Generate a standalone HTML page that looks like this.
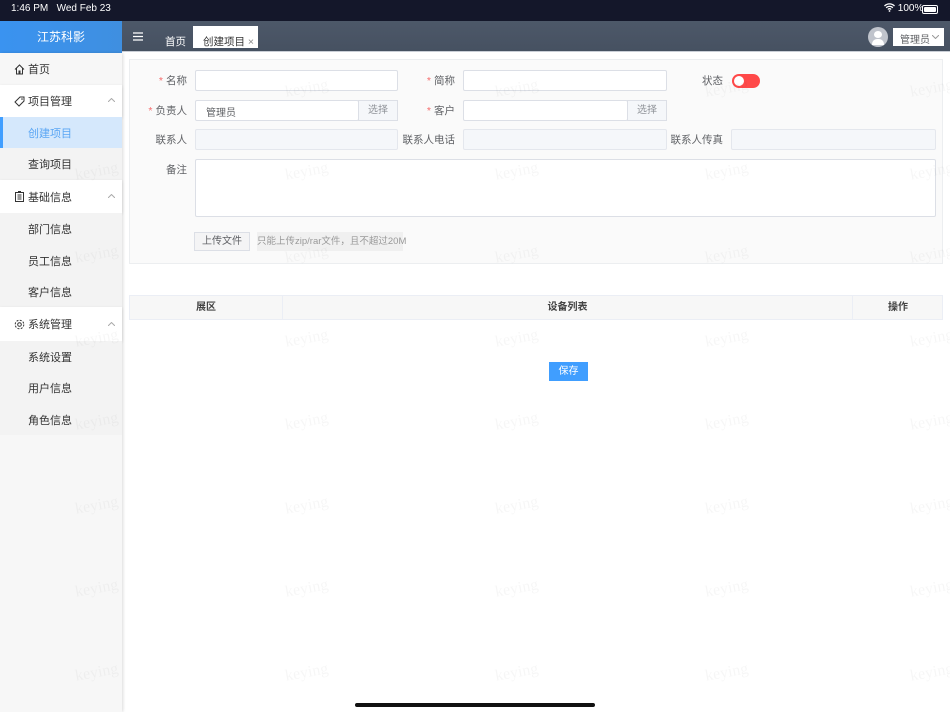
<!DOCTYPE html>
<html><head><meta charset="utf-8"><style>
*{margin:0;padding:0;box-sizing:border-box}
body{width:950px;height:712px;overflow:hidden;position:relative;background:#fff;font-family:"Liberation Sans","Noto Sans CJK SC",sans-serif;font-size:10px;color:#606266}
.a{position:absolute}
.sb{left:0;top:0;width:950px;height:21px;background:#14172a;color:#fff;font-size:10px}
.hd{left:122px;top:21px;width:828px;height:31px;background:linear-gradient(#4d5869,#465161);border-bottom:1px solid #c9ced6}
.logo{left:0;top:21px;width:122px;height:32px;background:linear-gradient(90deg,#3a93f0,#3f8fe0);color:#fff;font-size:12px;text-align:center;line-height:32px}
.side{left:0;top:53px;width:122px;height:659px;background:#f7f7f7;box-shadow:1px 0 3px rgba(0,0,0,.15)}
.mi{position:absolute;left:0;width:122px;font-size:11px;color:#333;display:flex;align-items:center}
.grp{background:#fff;box-shadow:0 1px 3px rgba(0,0,0,.12)}
.sub{background:#f3f3f3;padding-left:28px}
.lb{position:absolute;font-size:10.5px;color:#606266;text-align:right}
.lb i{color:#f56c6c;font-style:normal;margin-right:3px}
.in{position:absolute;background:#fff;border:1px solid #dcdfe6;border-radius:2px}
.dis{background:#f5f7fa;border-color:#e4e7ed}
.btn{position:absolute;background:#f5f7fa;border:1px solid #dcdfe6;color:#909399;font-size:10px;text-align:center}
.wm{position:absolute;font-family:"Liberation Serif",serif;font-size:16px;color:rgba(0,0,0,.035);transform:rotate(-10deg)}
.ch{position:absolute;left:108px}
</style></head><body>
<div class="a sb"><span class="a" style="left:11px;top:3px">1:46 PM&nbsp;&nbsp; Wed Feb 23</span>
<span class="a" style="left:884px;top:3px">
<svg width="11" height="9" viewBox="0 0 11 9" style="vertical-align:-1px"><path d="M0.5 3a7 7 0 0 1 10 0M2.2 4.8a4.5 4.5 0 0 1 6.6 0M3.9 6.5a2 2 0 0 1 3.2 0" stroke="#fff" stroke-width="1.3" fill="none"/><circle cx="5.5" cy="8" r="0.9" fill="#fff"/></svg> 100%</span>
<span class="a" style="left:922px;top:5px;width:16px;height:9px;border:1px solid #fff;border-radius:2px;padding:1px"><span style="display:block;width:100%;height:100%;background:#fff;border-radius:1px"></span></span></div>
<div class="a logo">江苏科影</div>
<div class="a hd">
<svg class="a" style="left:11px;top:11px" width="10" height="9"><path d="M0 1h10M0 4.5h10M0 8h10" stroke="#fff" stroke-width="1.2"/></svg>
<span class="a" style="left:43px;top:13px;color:#fff;font-size:10.5px">首页</span>
<div class="a" style="left:71px;top:5px;width:65px;height:22px;background:#fff;font-size:10.5px;color:#333;padding:8px 0 0 10px;white-space:nowrap">创建项目 <span style="color:#888">×</span></div>
<div class="a" style="left:746px;top:6px;width:20px;height:20px;border-radius:50%;background:#c0c4cc;overflow:hidden"><div class="a" style="left:6px;top:4px;width:8px;height:7px;border-radius:50%;background:#fff"></div><div class="a" style="left:4px;top:12px;width:12px;height:6px;border-radius:5px 5px 0 0;background:#fff"></div></div>
<div class="a" style="left:771px;top:7px;width:51px;height:18px;background:#fff;color:#606266;font-size:10px;padding:3px 0 0 7px">管理员<svg class="a" style="left:39px;top:7px" width="7" height="4"><path d="M0 0l3.5 3.5L7 0" stroke="#999" fill="none"/></svg></div>
</div>
<div class="a side">
<div class="mi" style="top:0;height:32px;padding-left:14px"><svg width="11" height="11" viewBox="0 0 11 11" style="margin-right:3px"><path d="M1 5.5L5.5 1 10 5.5M2.5 4v6h2.5V7h1v3h2.5V4" stroke="#333" fill="none"/></svg>首页</div>
<div class="mi grp" style="top:32px;height:32px;padding-left:14px"><svg width="11" height="11" viewBox="0 0 11 11" style="margin-right:3px"><path d="M1 6L6 1h4v4l-5 5z" stroke="#333" fill="none"/><circle cx="8" cy="3" r=".8" fill="#333"/></svg>项目管理<svg class="ch" style="top:13px" width="7" height="4"><path d="M0 4l3.5-3.5L7 4" stroke="#aaa" fill="none"/></svg></div>
<div class="mi" style="top:64px;height:31px;background:#d5e8fc;color:#5aa6f4;border-left:3px solid #409eff;padding-left:25px">创建项目</div>
<div class="mi sub" style="top:95px;height:32px">查询项目</div>
<div class="mi grp" style="top:127px;height:33px;padding-left:14px"><svg width="11" height="11" viewBox="0 0 11 11" style="margin-right:3px"><path d="M1.5 1.5h8v9h-8zM3.5 4h4M3.5 6h4M3.5 8h4M4 .5h3" stroke="#333" fill="none"/></svg>基础信息<svg class="ch" style="top:14px" width="7" height="4"><path d="M0 4l3.5-3.5L7 4" stroke="#aaa" fill="none"/></svg></div>
<div class="mi sub" style="top:160px;height:32px">部门信息</div>
<div class="mi sub" style="top:192px;height:31px">员工信息</div>
<div class="mi sub" style="top:223px;height:31px">客户信息</div>
<div class="mi grp" style="top:254px;height:34px;padding-left:14px"><svg width="11" height="11" viewBox="0 0 11 11" style="margin-right:3px"><circle cx="5.5" cy="5.5" r="1.8" stroke="#333" fill="none"/><circle cx="5.5" cy="5.5" r="4.3" stroke="#333" stroke-dasharray="2 1.4" fill="none"/></svg>系统管理<svg class="ch" style="top:15px" width="7" height="4"><path d="M0 4l3.5-3.5L7 4" stroke="#aaa" fill="none"/></svg></div>
<div class="mi sub" style="top:288px;height:31px">系统设置</div>
<div class="mi sub" style="top:319px;height:32px">用户信息</div>
<div class="mi sub" style="top:351px;height:31px">角色信息</div>
</div>
<div class="a" style="left:129px;top:59px;width:814px;height:205px;background:#fafafa;border:1px solid #eceef0"></div>
<div class="lb" style="left:130px;top:73px;width:57px"><i>*</i>名称</div>
<div class="in" style="left:195px;top:70px;width:203px;height:21px"></div>
<div class="lb" style="left:398px;top:73px;width:57px"><i>*</i>简称</div>
<div class="in" style="left:463px;top:70px;width:204px;height:21px"></div>
<div class="lb" style="left:680px;top:73px;width:43px">状态</div>
<div class="a" style="left:732px;top:74px;width:28px;height:14px;border-radius:7px;background:#ff4949"><div class="a" style="left:2px;top:2px;width:10px;height:10px;border-radius:50%;background:#fff"></div></div>
<div class="lb" style="left:130px;top:103px;width:57px"><i>*</i>负责人</div>
<div class="in" style="left:195px;top:100px;width:164px;height:21px;padding:3px 0 0 10px;font-size:10px">管理员</div>
<div class="btn" style="left:358px;top:100px;width:40px;height:21px;line-height:19px">选择</div>
<div class="lb" style="left:398px;top:103px;width:57px"><i>*</i>客户</div>
<div class="in" style="left:463px;top:100px;width:165px;height:21px"></div>
<div class="btn" style="left:627px;top:100px;width:40px;height:21px;line-height:19px">选择</div>
<div class="lb" style="left:130px;top:132px;width:57px">联系人</div>
<div class="in dis" style="left:195px;top:129px;width:203px;height:21px"></div>
<div class="lb" style="left:395px;top:132px;width:60px">联系人电话</div>
<div class="in dis" style="left:463px;top:129px;width:204px;height:21px"></div>
<div class="lb" style="left:663px;top:132px;width:60px">联系人传真</div>
<div class="in dis" style="left:731px;top:129px;width:205px;height:21px"></div>
<div class="lb" style="left:130px;top:162px;width:57px">备注</div>
<div class="in" style="left:195px;top:159px;width:741px;height:58px"></div>
<div class="btn" style="left:194px;top:232px;width:56px;height:19px;line-height:17px;color:#606266;background:#f4f4f5">上传文件</div>
<div class="a" style="left:257px;top:232px;width:146px;height:19px;background:#f0f0f0;color:#999;font-size:9.5px;line-height:19px;text-align:center;white-space:nowrap">只能上传zip/rar文件，且不超过20M</div>
<div class="a" style="left:129px;top:295px;width:814px;height:25px;background:#f7f7f7;border:1px solid #ebeef5;font-weight:bold;color:#444;font-size:10px">
<span class="a" style="left:0;width:153px;top:0;height:23px;line-height:23px;text-align:center;border-right:1px solid #ebeef5">展区</span>
<span class="a" style="left:153px;width:570px;top:0;height:23px;line-height:23px;text-align:center;border-right:1px solid #ebeef5">设备列表</span>
<span class="a" style="left:723px;width:90px;top:0;height:23px;line-height:23px;text-align:center">操作</span></div>
<div class="a" style="left:549px;top:362px;width:39px;height:19px;background:#409eff;color:#fff;font-size:10px;line-height:19px;text-align:center">保存</div>
<div class="wm" style="left:285px;top:80px">keying</div><div class="wm" style="left:495px;top:80px">keying</div><div class="wm" style="left:705px;top:80px">keying</div><div class="wm" style="left:910px;top:80px">keying</div>
<div class="wm" style="left:75px;top:163px">keying</div><div class="wm" style="left:285px;top:163px">keying</div><div class="wm" style="left:495px;top:163px">keying</div><div class="wm" style="left:705px;top:163px">keying</div><div class="wm" style="left:910px;top:163px">keying</div>
<div class="wm" style="left:75px;top:246px">keying</div><div class="wm" style="left:285px;top:246px">keying</div><div class="wm" style="left:495px;top:246px">keying</div><div class="wm" style="left:705px;top:246px">keying</div><div class="wm" style="left:910px;top:246px">keying</div>
<div class="wm" style="left:75px;top:330px">keying</div><div class="wm" style="left:285px;top:330px">keying</div><div class="wm" style="left:495px;top:330px">keying</div><div class="wm" style="left:705px;top:330px">keying</div><div class="wm" style="left:910px;top:330px">keying</div>
<div class="wm" style="left:75px;top:413px">keying</div><div class="wm" style="left:285px;top:413px">keying</div><div class="wm" style="left:495px;top:413px">keying</div><div class="wm" style="left:705px;top:413px">keying</div><div class="wm" style="left:910px;top:413px">keying</div>
<div class="wm" style="left:75px;top:497px">keying</div><div class="wm" style="left:285px;top:497px">keying</div><div class="wm" style="left:495px;top:497px">keying</div><div class="wm" style="left:705px;top:497px">keying</div><div class="wm" style="left:910px;top:497px">keying</div>
<div class="wm" style="left:75px;top:580px">keying</div><div class="wm" style="left:285px;top:580px">keying</div><div class="wm" style="left:495px;top:580px">keying</div><div class="wm" style="left:705px;top:580px">keying</div><div class="wm" style="left:910px;top:580px">keying</div>
<div class="wm" style="left:75px;top:664px">keying</div><div class="wm" style="left:285px;top:664px">keying</div><div class="wm" style="left:495px;top:664px">keying</div><div class="wm" style="left:705px;top:664px">keying</div><div class="wm" style="left:910px;top:664px">keying</div>
<div class="a" style="left:355px;top:703px;width:240px;height:4px;border-radius:2px;background:#111"></div>
</body></html>
